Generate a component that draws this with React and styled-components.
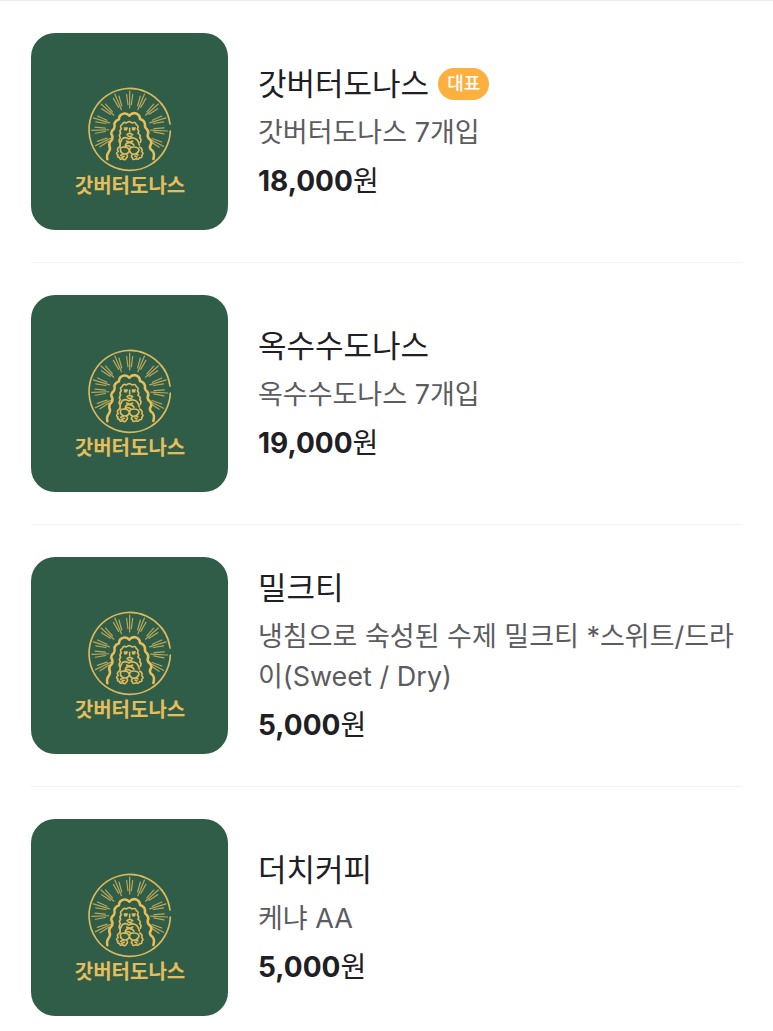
import React from 'react';
import styled, { createGlobalStyle } from 'styled-components';

const GlobalStyle = createGlobalStyle`
  *, *::before, *::after { box-sizing: border-box; }
  body {
    margin: 0;
    background: #ffffff;
    color: #202024;
    font-family: Inter, "Noto Sans CJK KR", sans-serif;
  }
`;

const Page = styled.main`
  border-top: 1px solid #ebebef;
  padding: 0 31px;
`;

const MenuList = styled.ul`
  list-style: none;
  margin: 0;
  padding: 0;
`;

const MenuItem = styled.li`
  display: flex;
  align-items: center;
  gap: 30px;
  padding: 32px 0;
  border-bottom: 1px solid #f3f3f5;

  &:last-child { border-bottom: 0; padding-bottom: 16px; }
`;

const Thumbnail = styled.svg`
  display: block;
  flex: none;
  width: 197px;
  height: 197px;
  border-radius: 24px;
  background: #2f5d48;
`;

const Wordmark = styled.text`
  font-family: "Noto Sans CJK KR", sans-serif;
  font-size: 20px;
  font-weight: 700;
  fill: #e6bd5c;
`;

const Details = styled.div`
  flex: 1;
  min-width: 0;
`;

const TitleRow = styled.div`
  display: flex;
  align-items: center;
  gap: 9px;
`;

const Title = styled.h2`
  margin: 0;
  font-size: 31px;
  line-height: 42px;
  font-weight: 400;
`;

const Badge = styled.span`
  padding: 0 9px;
  border-radius: 16px;
  background: #fdb03e;
  color: #ffffff;
  font-size: 18px;
  line-height: 32px;
  font-weight: 500;
`;

const Description = styled.p`
  margin: 8px 0;
  color: #5b5b60;
  font-size: 27px;
  line-height: 40px;
  word-break: break-all;
`;

const Price = styled.p`
  margin: 0;
  font-size: 28px;
  line-height: 40px;
`;

const Amount = styled.strong`
  font-weight: 700;
`;

const RAY_ANGLES = [-206, -182, -163, -139, -113, -90, -67, -41, -17, 3, 27];

const point = (angle, radius) => {
  const a = (angle * Math.PI) / 180;
  return `${(149 + radius * Math.cos(a)).toFixed(1)} ${(147 + radius * Math.sin(a)).toFixed(1)}`;
};

const rays = RAY_ANGLES.map((a) =>
  [
    `M${point(a, 63)}L${point(a, 114)}`,
    `M${point(a - 4, 73)}L${point(a - 5, 104)}`,
    `M${point(a + 4, 73)}L${point(a + 5, 104)}`,
  ].join('')
).join('');

function Logo({ name }) {
  return (
    <Thumbnail viewBox="0 0 197 197" role="img" aria-label={name}>
      <g
        transform="translate(49 47) scale(.3333)"
        fill="none"
        stroke="#dcb95c"
        strokeLinecap="round"
        strokeLinejoin="round"
      >
        <path d="M270 132A122 123 0 1 0 271 153M270 132A122 123 0 0 0 244 70" strokeWidth="5" />
        <path d={rays} strokeWidth="3.6" opacity=".8" />
        <path
          stroke="#e9bd58"
          strokeWidth="7.5"
          d="M82 238Q79 225 86 216Q93 207 88 197Q86 187 96 179Q100 171 94 162Q93 153 102 146Q106 139 103 131Q107 121 117 118Q117 104 130 101Q141 98 148 107Q158 96 170 101Q180 106 180 117Q193 121 195 132Q193 142 201 148Q208 156 203 165Q202 174 212 181Q217 189 210 198Q208 207 218 213Q225 222 220 237"
        />
        <g stroke="#e3bb5a" strokeWidth="4.8">
          <path d="M124 146Q118 138 127 133Q130 124 139 129Q148 121 156 129Q166 124 169 134Q178 139 172 146Q179 153 174 160Q184 166 179 173Q186 179 181 187M124 146Q117 153 122 160Q115 166 121 173Q115 180 119 188" />
          <path d="M133 144H142M157 144H166M134 149H140M158 149H164M149 145V155M141 164Q149 156 158 164M144 168Q149 171 155 168" />
          <path d="M127 176Q137 169 146 177Q158 170 170 178Q176 184 178 195M126 178Q119 187 120 201M140 183L149 187L158 183M136 196Q139 187 147 188Q157 187 162 196" />
          <path d="M133 202Q143 191 153 202M121 207Q123 200 133 201Q144 200 148 210Q148 219 138 222Q121 222 121 207ZM148 210Q150 200 162 201Q175 201 177 210Q175 220 162 223Q151 222 148 210Z" />
          <path d="M119 200Q108 207 115 215Q105 220 114 225Q109 233 119 232Q119 241 128 236Q136 243 139 234Q146 229 139 222M179 201Q190 208 185 215Q193 221 185 226Q188 234 179 233Q174 241 168 236Q158 242 157 233Q151 229 158 224M122 226L130 223M125 232L133 229M174 225L168 222M171 231L165 228" />
        </g>
      </g>
      <Wordmark x="99" y="160" textAnchor="middle">갓버터도나스</Wordmark>
    </Thumbnail>
  );
}

const ITEMS = [
  { title: '갓버터도나스', badge: '대표', description: '갓버터도나스 7개입', price: '18,000' },
  { title: '옥수수도나스', description: '옥수수도나스 7개입', price: '19,000' },
  { title: '밀크티', description: '냉침으로 숙성된 수제 밀크티 *스위트/드라이(Sweet / Dry)', price: '5,000' },
  { title: '더치커피', description: '케냐 AA', price: '5,000' },
];

export default function App() {
  return (
    <>
      <GlobalStyle />
      <Page>
        <MenuList>
          {ITEMS.map((item) => (
            <MenuItem key={item.title}>
              <Logo name="갓버터도나스" />
              <Details>
                <TitleRow>
                  <Title>{item.title}</Title>
                  {item.badge && <Badge>{item.badge}</Badge>}
                </TitleRow>
                <Description>{item.description}</Description>
                <Price>
                  <Amount>{item.price}</Amount>원
                </Price>
              </Details>
            </MenuItem>
          ))}
        </MenuList>
      </Page>
    </>
  );
}
